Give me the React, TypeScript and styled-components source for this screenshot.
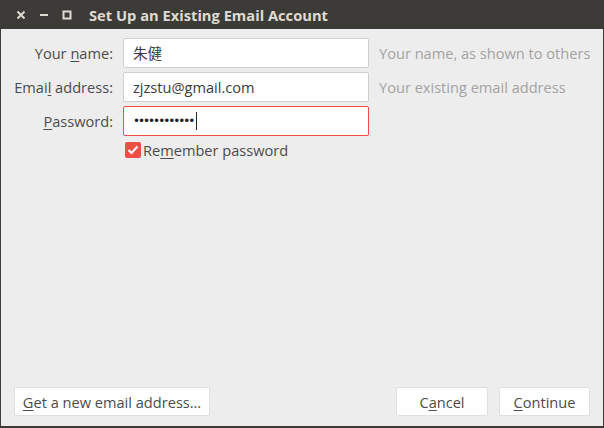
import React from "react";
import styled, { createGlobalStyle } from "styled-components";

const Global = createGlobalStyle`
  html, body { margin: 0; padding: 0; background: #3c3b37; }
  body { font-family: "Open Sans", "Noto Sans CJK SC", sans-serif; }
`;

const Window = styled.div`
  width: 604px;
  height: 428px;
  box-sizing: border-box;
  background: #3c3b37;
  display: flex;
  flex-direction: column;
  padding: 0 1px 2px 1px;
`;

const TitleBar = styled.div`
  height: 29px;
  display: flex;
  align-items: center;
  padding-left: 8px;
  flex-shrink: 0;
`;

const WinButton = styled.span`
  width: 23px;
  height: 29px;
  display: flex;
  align-items: center;
  justify-content: center;
  color: #dfdbd2;
`;

const Title = styled.span`
  margin-left: 11px;
  color: #dfdbd2;
  font-weight: bold;
  font-size: 14.7px;
  font-family: "Open Sans", sans-serif;
`;

const Body = styled.div`
  flex: 1;
  background: #ededed;
  display: flex;
  flex-direction: column;
  justify-content: space-between;
  padding: 9px 0 10px 0;
`;

const Form = styled.div`
  display: grid;
  grid-template-columns: 112px 246px auto;
  column-gap: 10px;
  row-gap: 4px;
  align-items: center;
`;

const Label = styled.label`
  text-align: right;
  color: #4c4c4c;
  font-size: 14.6px;
  white-space: nowrap;
  u { text-decoration: underline; text-underline-offset: 2px; }
`;

const Input = styled.div<{ $focused?: boolean }>`
  height: 30px;
  box-sizing: border-box;
  background: #fff;
  border: 1px solid ${(p) => (p.$focused ? "#ef4e45" : "#cfcfcf")};
  border-radius: 2px;
  display: flex;
  align-items: center;
  padding-left: 9px;
  padding-bottom: 1px;
  font-size: 14.6px;
  color: #3c3c3c;
  font-family: "Open Sans", "Noto Sans CJK SC", sans-serif;
`;

const Dots = styled.span`
  font-size: 12px;
  letter-spacing: -2.05px;
  color: #222;
  font-family: "DejaVu Sans", sans-serif;
`;

const Caret = styled.span`
  width: 1px;
  height: 18px;
  background: #222;
  margin-left: 3px;
`;

const Hint = styled.span`
  color: #a3a3a3;
  font-size: 14.6px;
  white-space: nowrap;
`;

const CheckRow = styled.div`
  grid-column: 2 / 4;
  display: flex;
  align-items: center;
  gap: 2px;
  margin-left: 2px;
  margin-top: 0px;
  color: #4c4c4c;
  font-size: 14.6px;
  u { text-decoration: underline; text-underline-offset: 2px; }
`;

const Box = styled.span`
  width: 16px;
  height: 16px;
  border-radius: 2px;
  background: #ef4e45;
  display: flex;
  align-items: center;
  justify-content: center;
`;

const Footer = styled.div`
  display: flex;
  align-items: center;
  padding: 0 13px;
  gap: 11px;
`;

const Button = styled.button<{ $w: number }>`
  width: ${(p) => p.$w}px;
  height: 29px;
  background: #fff;
  border: 1px solid #e0e0e0;
  border-radius: 2px;
  font-family: "Open Sans", sans-serif;
  font-size: 14.6px;
  color: #4c4c4c;
  padding: 0;
  u { text-decoration: underline; text-underline-offset: 2px; }
`;

const Spacer = styled.div`
  flex: 1;
`;

export default function App() {
  return (
    <>
      <Global />
      <Window>
        <TitleBar>
          <WinButton>
            <svg width="10" height="10" viewBox="0 0 10 10">
              <path d="M1.5 1.5 L8.5 8.5 M8.5 1.5 L1.5 8.5" stroke="#dfdbd2" strokeWidth="2" />
            </svg>
          </WinButton>
          <WinButton>
            <svg width="10" height="10" viewBox="0 0 10 10">
              <path d="M1 5 H9" stroke="#dfdbd2" strokeWidth="2" />
            </svg>
          </WinButton>
          <WinButton>
            <svg width="10" height="10" viewBox="0 0 10 10">
              <rect x="1.5" y="1.5" width="7" height="7" fill="none" stroke="#dfdbd2" strokeWidth="2" />
            </svg>
          </WinButton>
          <Title>Set Up an Existing Email Account</Title>
        </TitleBar>
        <Body>
          <Form>
            <Label>
              Your <u>n</u>ame:
            </Label>
            <Input>朱健</Input>
            <Hint>Your name, as shown to others</Hint>
            <Label>
              Emai<u>l</u> address:
            </Label>
            <Input>zjzstu@gmail.com</Input>
            <Hint>Your existing email address</Hint>
            <Label>
              <u>P</u>assword:
            </Label>
            <Input $focused>
              <Dots>••••••••••••</Dots>
              <Caret />
            </Input>
            <span />
            <span />
            <CheckRow>
              <Box>
                <svg width="12" height="10" viewBox="0 0 12 10">
                  <path d="M1.5 5 L4.5 8 L10.5 1.5" stroke="#fff" strokeWidth="2.2" fill="none" />
                </svg>
              </Box>
              <span>
                Re<u>m</u>ember password
              </span>
            </CheckRow>
          </Form>
          <Footer>
            <Button $w={196}>
              <u>G</u>et a new email address…
            </Button>
            <Spacer />
            <Button $w={92}>
              C<u>a</u>ncel
            </Button>
            <Button $w={91}>
              <u>C</u>ontinue
            </Button>
          </Footer>
        </Body>
      </Window>
    </>
  );
}
